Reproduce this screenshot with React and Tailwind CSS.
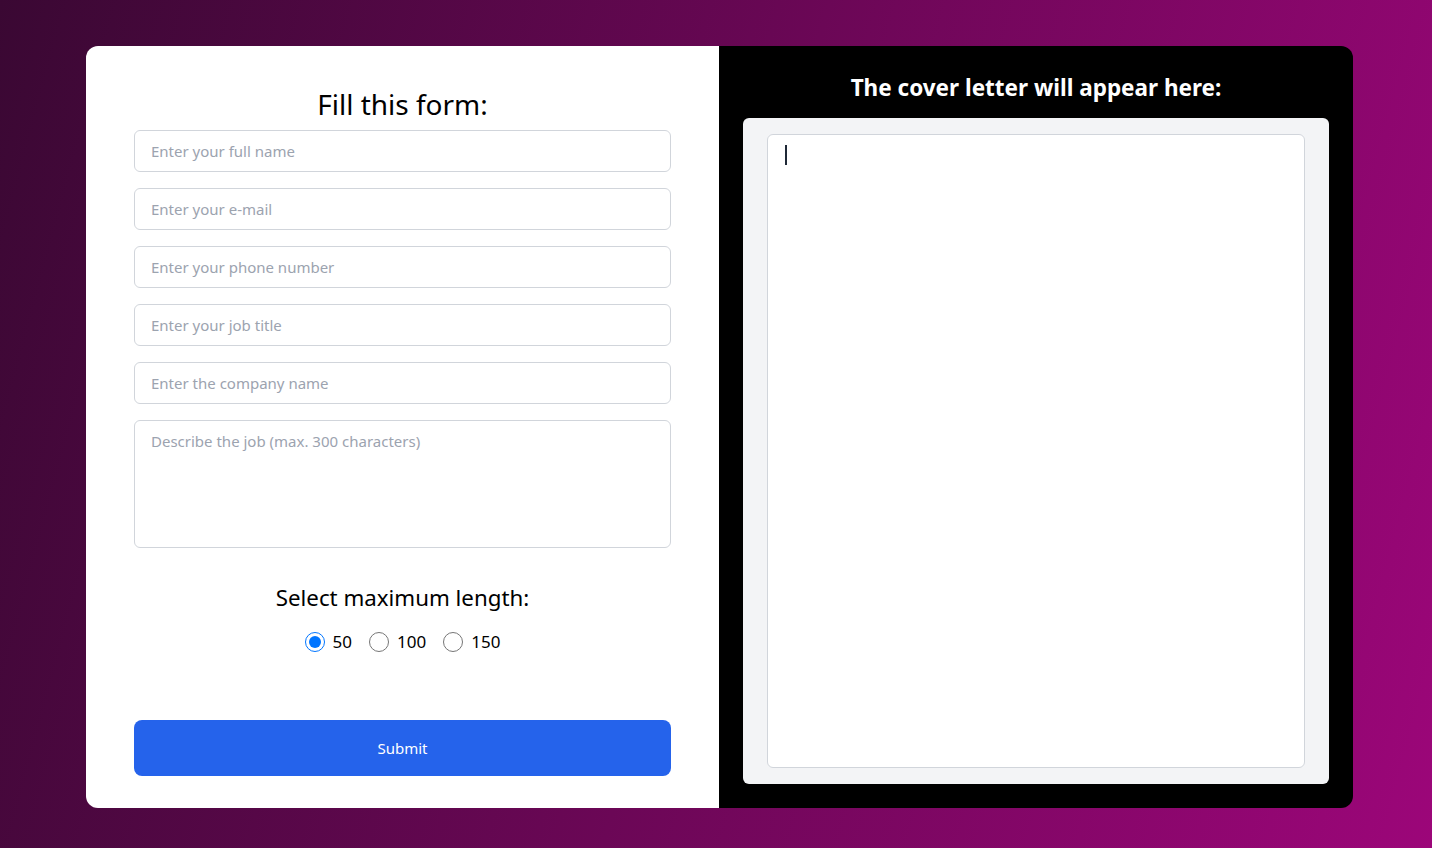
import React from "react";

export default function App() {
  return (
    <div
      className="w-[1432px] h-[848px] flex items-start justify-start pl-[86px] pt-[46px] bg-[linear-gradient(105deg,#3a0833_0%,#9c0679_100%)]"
      style={{ fontFamily: '"Noto Sans", "Open Sans", sans-serif' }}
    >
      <div className="w-[1267px] h-[762px] flex rounded-xl overflow-hidden">
        {/* Left */}
        <div className="w-[633px] bg-white px-12 pt-[40px] pb-8 flex flex-col">
          <h1 className="text-[28px] leading-[36px] text-black text-center mb-[8px]">Fill this form:</h1>
          <div className="flex flex-col gap-4">
            {[
              "Enter your full name",
              "Enter your e-mail",
              "Enter your phone number",
              "Enter your job title",
              "Enter the company name",
            ].map((p) => (
              <input
                key={p}
                placeholder={p}
                className="h-[42px] w-full border border-[#d1d5db] rounded-md px-4 text-[15px] text-gray-800 placeholder:text-[#9ca3af] outline-none"
              />
            ))}
            <textarea
              placeholder="Describe the job (max. 300 characters)"
              className="h-[128px] w-full border border-[#d1d5db] rounded-md px-4 py-[9px] text-[15px] text-gray-800 placeholder:text-[#9ca3af] outline-none resize-none"
            />
          </div>
          <h2 className="text-[22.3px] leading-[32px] text-black text-center mt-[34px]">Select maximum length:</h2>
          <div className="flex items-center justify-center gap-[17px] mt-[15px] text-[17px] text-black">
            {["50", "100", "150"].map((v) => (
              <label key={v} className="flex items-center gap-2">
                <input
                  type="radio"
                  name="len"
                  defaultChecked={v === "50"}
                  className="w-5 h-5 m-0 accent-[#0075ff]"
                />
                <span>{v}</span>
              </label>
            ))}
          </div>
          <button className="mt-auto h-[56px] w-full rounded-lg bg-[#2563eb] text-white text-[15px]">
            Submit
          </button>
        </div>
        {/* Right */}
        <div className="flex-1 bg-black px-6 pb-6 pt-[26px] flex flex-col">
          <h2 className="text-[22.5px] leading-[32px] font-bold text-white text-center mb-[14px]">
            The cover letter will appear here:
          </h2>
          <div className="flex-1 bg-[#f3f4f6] rounded-md px-6 py-4 flex">
            <div className="relative flex-1 bg-white border border-[#d1d5db] rounded-md">
              <textarea className="w-full h-full resize-none outline-none bg-transparent p-4 text-[15px]" />
              <div className="absolute left-[17px] top-[10px] w-[2px] h-[20px] bg-[#1f2937]" />
            </div>
          </div>
        </div>
      </div>
    </div>
  );
}
